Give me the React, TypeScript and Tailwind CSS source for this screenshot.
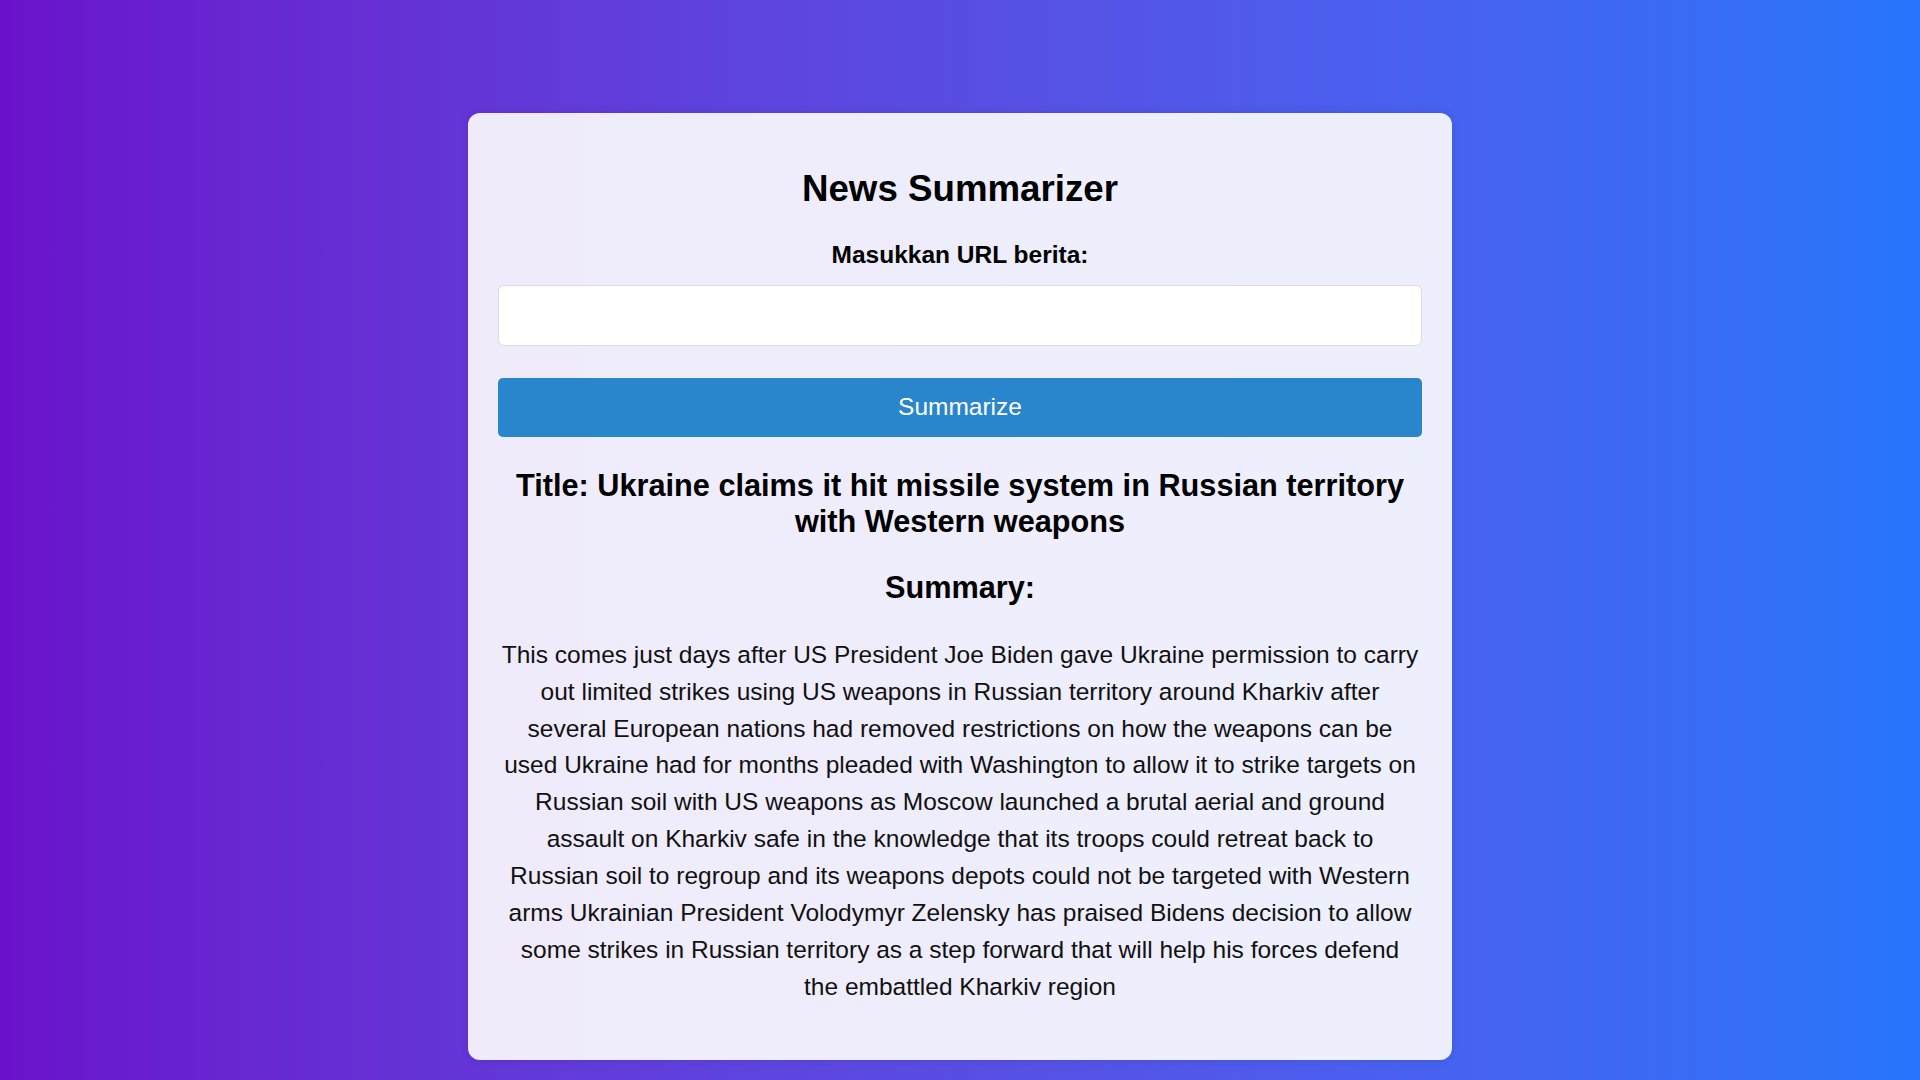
import React from "react";

const lines = [
  "This comes just days after US President Joe Biden gave Ukraine permission to carry",
  "out limited strikes using US weapons in Russian territory around Kharkiv after",
  "several European nations had removed restrictions on how the weapons can be",
  "used Ukraine had for months pleaded with Washington to allow it to strike targets on",
  "Russian soil with US weapons as Moscow launched a brutal aerial and ground",
  "assault on Kharkiv safe in the knowledge that its troops could retreat back to",
  "Russian soil to regroup and its weapons depots could not be targeted with Western",
  "arms Ukrainian President Volodymyr Zelensky has praised Bidens decision to allow",
  "some strikes in Russian territory as a step forward that will help his forces defend",
  "the embattled Kharkiv region",
];

export default function App() {
  return (
    <div
      className="min-h-screen w-full flex justify-center bg-gradient-to-r from-[#6a11cb] to-[#2575fc] pt-[113px] pb-[20px]"
      style={{ fontFamily: '"Liberation Sans", Arial, sans-serif' }}
    >
      <div className="w-[984px] h-[947px] flex flex-col bg-white/90 rounded-[12px] px-[30px] pt-[30px] pb-[30px] text-center shadow-[0_0_10px_rgba(0,0,0,0.1)]">
        <h1 className="text-[36.7px] leading-[42.2px] font-bold text-black mt-[24.6px] mb-[24.6px]">
          News Summarizer
        </h1>
        <label className="block text-[24.5px] leading-[28.2px] font-bold text-black mt-[7px]">
          Masukkan URL berita:
        </label>
        <input
          type="text"
          className="block w-full h-[61px] mt-[15.3px] bg-white border border-[#dcdcdc] rounded-[6px] px-[15px] text-[24.5px] outline-none"
        />
        <button className="block w-full h-[59.4px] mt-[31.7px] bg-[#2986cc] text-white text-[24.5px] rounded-[5px]">
          Summarize
        </button>
        <h2 className="text-[30.7px] leading-[35.3px] font-bold text-black mt-[31.5px]">
          Title: Ukraine claims it hit missile system in Russian territory with Western weapons
        </h2>
        <h2 className="text-[30.7px] leading-[35.3px] font-bold text-black mt-[31px]">
          Summary:
        </h2>
        <p className="text-[24.5px] leading-[36.87px] text-[#111] mt-[31.4px] whitespace-nowrap">
          {lines.map((l, i) => (
            <React.Fragment key={i}>
              {l}
              {i < lines.length - 1 && <br />}
            </React.Fragment>
          ))}
        </p>
      </div>
    </div>
  );
}
